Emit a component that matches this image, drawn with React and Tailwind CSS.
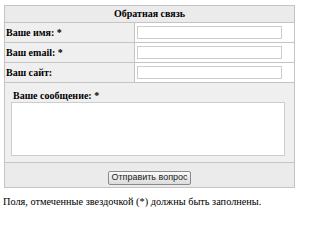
import React, { useState } from 'react';

function App() {
  const [name, setName] = useState('');
  const [email, setEmail] = useState('');
  const [site, setSite] = useState('');
  const [message, setMessage] = useState('');

  const rows = [
    { label: 'Ваше имя: *', value: name, set: setName },
    { label: 'Ваш email: *', value: email, set: setEmail },
    { label: 'Ваш сайт:', value: site, set: setSite },
  ];

  return (
    <div className="bg-white w-[300px] h-[217px] pt-[5px] pl-[4px] font-['Liberation_Serif',serif] text-black">
      <table className="w-[291px] border-collapse border border-[#c4c4c4]">
        <tbody>
          <tr className="h-[17px] bg-[#ebebeb]">
            <td colSpan={2} className="border border-[#c4c4c4] text-center text-[10px] font-bold leading-none">
              Обратная связь
            </td>
          </tr>
          {rows.map((row) => (
            <tr key={row.label} className="h-[20px]">
              <td className="w-[130px] border border-[#c4c4c4] bg-[#efefef] pl-[1px] text-[10px] font-bold leading-none">
                {row.label}
              </td>
              <td className="border border-[#c4c4c4] bg-white pl-[2px]">
                <input
                  type="text"
                  value={row.value}
                  onChange={(e) => row.set(e.target.value)}
                  className="block w-[145px] h-[13px] border border-[#cdcdcd] bg-white outline-none"
                />
              </td>
            </tr>
          ))}
          <tr>
            <td colSpan={2} className="border border-[#c4c4c4] bg-[#efefef] px-[6px] pt-[8px] pb-[6px]">
              <div className="pl-[2px] text-[10px] font-bold leading-none mb-[1px]">Ваше сообщение: *</div>
              <textarea
                value={message}
                onChange={(e) => setMessage(e.target.value)}
                className="block w-[274px] h-[54px] border border-[#cdcdcd] bg-white resize-none outline-none"
              />
            </td>
          </tr>
          <tr className="h-[25px] bg-[#ebebeb]">
            <td colSpan={2} className="border border-[#c4c4c4] text-center">
              <button
                type="button"
                className="inline-flex items-center justify-center w-[83px] h-[14px] border border-[#8a8a8a] rounded-[2px] bg-gradient-to-b from-[#fafafa] to-[#dcdcdc] font-['Liberation_Sans',sans-serif] text-[9px] leading-none text-[#222]"
              >
                Отправить вопрос
              </button>
            </td>
          </tr>
        </tbody>
      </table>
      <p className="mt-[9px] -ml-[1px] text-[10.3px] leading-none whitespace-nowrap">
        Поля, отмеченные звездочкой (*) должны быть заполнены.
      </p>
    </div>
  );
}

export default App;
